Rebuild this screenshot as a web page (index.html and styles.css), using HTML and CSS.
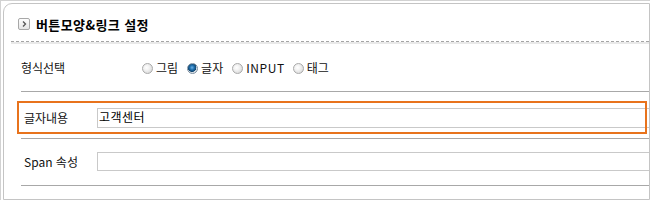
FILE: index.html
```html
<!DOCTYPE html>
<html lang="ko">
<head>
<meta charset="utf-8">
<title>버튼모양&amp;링크 설정</title>
<link rel="stylesheet" href="styles.css">
</head>
<body>
<div class="page">
  <div class="card">
    <div class="head">
      <svg class="head-icon" width="12" height="12" viewBox="0 0 12 12" aria-hidden="true">
        <defs>
          <linearGradient id="ig" x1="0" y1="0" x2="0" y2="1">
            <stop offset="0" stop-color="#ffffff"/>
            <stop offset="1" stop-color="#e4e4e4"/>
          </linearGradient>
        </defs>
        <rect x="0.5" y="0.5" width="11" height="11" rx="1.5" fill="url(#ig)" stroke="#a8a8a8"/>
        <path d="M5 3.5 L7.5 6 L5 8.5" fill="none" stroke="#555" stroke-width="1.3"/>
      </svg>
      <span class="title">버튼모양&amp;링크 설정</span>
    </div>
    <div class="head-band"></div>
    <div class="form">
      <div class="row row-type">
        <div class="label label-first">형식선택</div>
        <div class="radios">
          <span class="radio"></span><span class="opt">그림</span>
          <span class="radio checked"></span><span class="opt">글자</span>
          <span class="radio"></span><span class="opt opt-latin">INPUT</span>
          <span class="radio"></span><span class="opt">태그</span>
        </div>
      </div>
      <div class="row row-text">
        <div class="label">글자내용</div>
        <div class="field field-text">고객센터</div>
      </div>
      <div class="row row-span">
        <div class="label">Span 속성</div>
        <div class="field field-span"></div>
      </div>
      <div class="highlight"></div>
    </div>
  </div>
</div>
</body>
</html>
```
FILE: styles.css
```css
html, body {
  margin: 0;
  padding: 0;
  background: #ffffff;
}
body {
  font-family: "Noto Sans CJK KR", "Noto Sans", "Liberation Sans", sans-serif;
  font-size: 12px;
  color: #111;
  width: 650px;
  height: 200px;
  overflow: hidden;
}
.page {
  box-sizing: border-box;
  width: 650px;
  height: 200px;
  border-top: 1px solid #d2d2d2;
  border-left: 1px solid #d2d2d2;
  padding: 2px 0 0 2px;
}
.card {
  box-sizing: border-box;
  width: 647px;
  height: 197px;
  border: 1px solid #c4c4c4;
  border-top-left-radius: 9px;
  background: #fff;
  overflow: hidden;
}
.head {
  box-sizing: border-box;
  height: 38px;
  margin-left: 7px;
  padding: 14px 0 0 7px;
  display: flex;
  align-items: flex-start;
  gap: 6px;
  background-image: repeating-linear-gradient(to right, #a4a4a4 0 3px, transparent 3px 5px);
  background-size: 100% 1px;
  background-repeat: no-repeat;
  background-position: left bottom;
}
.head-icon {
  display: block;
  flex: none;
}
.title {
  font-weight: bold;
  font-size: 13px;
  line-height: 14px;
  margin-top: 0px;
  color: #000;
  letter-spacing: 0.4px;
}
.head-band {
  height: 2px;
  margin-left: 7px;
  background: #e9e9e9;
}
.form {
  position: relative;
  margin-left: 17px;
}
.row {
  display: flex;
  align-items: center;
  border-bottom: 1px solid #a8a8a8;
}
.row-type {
  height: 47px;
}
.row-text {
  padding: 16px 0 10px 0;
}
.row-span {
  padding: 13px 0 14px 0;
}
.label {
  box-sizing: border-box;
  width: 76px;
  flex: none;
  padding-left: 3px;
  line-height: 14px;
  color: #111;
}
.label-first {
  padding-left: 0;
  width: 121px;
  margin-top: 1px;
}
.radios {
  display: flex;
  align-items: center;
  margin-top: 1px;
}
.radio {
  box-sizing: border-box;
  width: 11px;
  height: 11px;
  border-radius: 50%;
  border: 1px solid #a9a9a9;
  background: radial-gradient(circle at 40% 40%, #ffffff 0, #f2f2f2 35%, #cfcfcf 100%);
  flex: none;
}
.radio.checked {
  border-color: #7b8ea0;
  background: radial-gradient(circle at 45% 40%, #6fb3e6 0, #1f6fae 30%, #10466f 55%, #d6dde4 62%, #f0f0f0 100%);
}
.opt {
  margin: 0 9px 0 3px;
  line-height: 14px;
}
.opt-latin {
  letter-spacing: 0.6px;
  margin-right: 8px;
}
.field {
  box-sizing: border-box;
  flex: 1;
  border: 1px solid #c9c9c9;
  border-right: none;
  padding-left: 1px;
  line-height: 16px;
}
.field-text {
  height: 20px;
  font-size: 12px;
  letter-spacing: 0.5px;
  color: #000;
}
.field-span {
  height: 19px;
}
.highlight {
  position: absolute;
  left: -4px;
  top: 57px;
  width: 630px;
  height: 33px;
  box-sizing: border-box;
  border: 2px solid #e8731c;
  pointer-events: none;
}
```
